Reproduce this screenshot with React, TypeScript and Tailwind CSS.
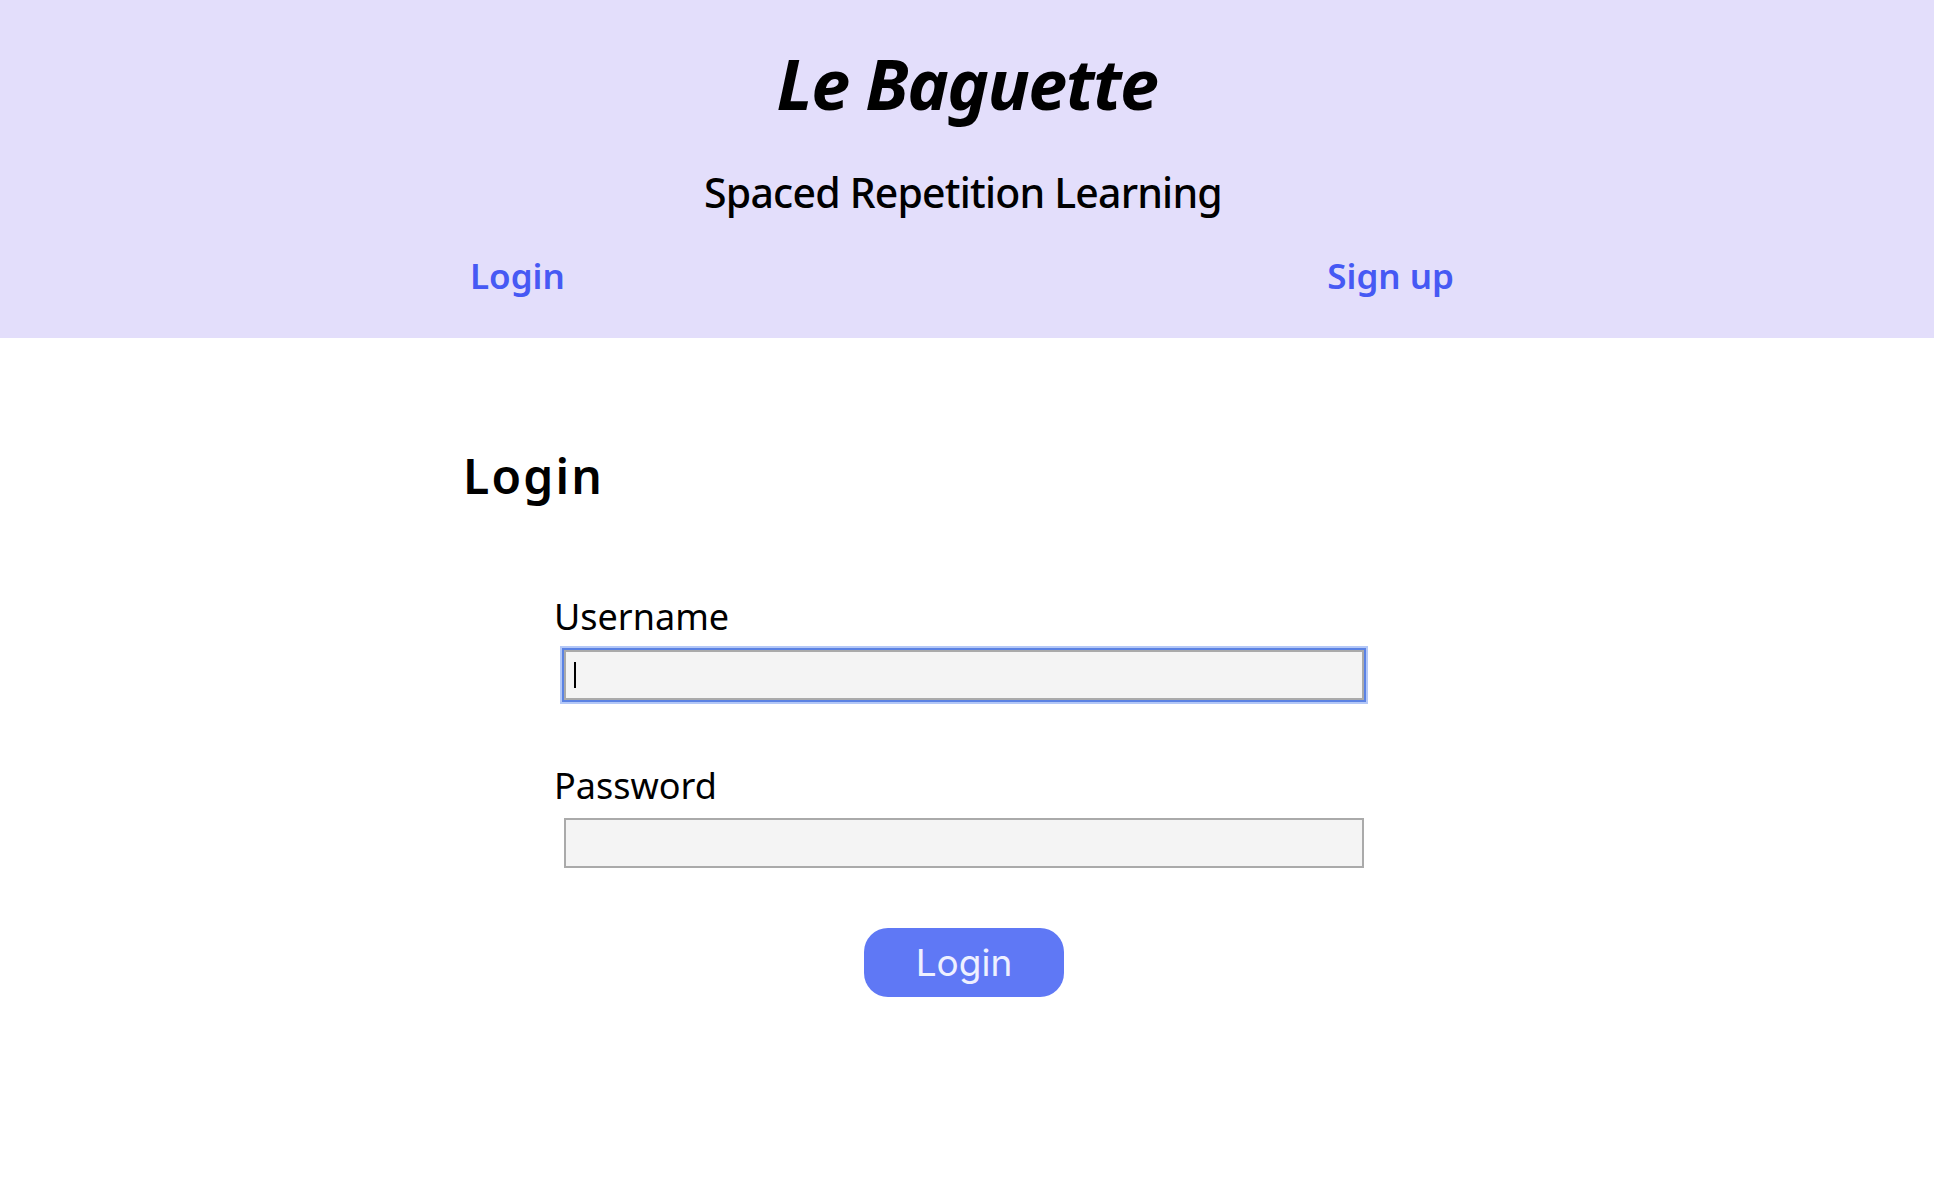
import React from "react";

export default function App() {
  const sans = { fontFamily: '"Noto Sans", "Open Sans", sans-serif' };
  return (
    <div className="min-h-[1182px] w-full bg-white text-black" style={sans}>
      <header className="bg-[#e3defb] h-[338px] pt-[47px] flex flex-col">
        <h1 className="text-center text-[70px] leading-[72px] font-bold italic tracking-[-1.5px]">Le Baguette</h1>
        <h2 className="mt-[52px] pr-[8px] text-center text-[41px] leading-[42px] font-medium tracking-[-0.8px]">Spaced Repetition Learning</h2>
        <nav className="mt-[45px] ml-[470px] w-[984px] flex justify-between text-[35px] leading-[36px] font-semibold text-[#4659f4]">
          <a href="#">Login</a>
          <a href="#">Sign up</a>
        </nav>
      </header>
      <main className="ml-[463px] w-[1000px]">
        <h1 className="mt-[114px] text-[48px] leading-[48px] font-semibold tracking-[2.2px]">Login</h1>
        <form className="ml-[1px] mt-[99px] flex flex-col" onSubmit={(e) => e.preventDefault()}>
          <label className="ml-[90px] text-[36px] leading-[36px]">Username</label>
          <div className="relative mt-[15px] ml-[100px] w-[800px] h-[50px]">
            <input
              type="text"
              className="w-full h-full bg-[#f4f4f4] border-2 border-[#aaaaaa] outline-none shadow-[0_0_0_2px_#5b82e3,0_0_0_4px_#b4c8f7]"
            />
            <span className="absolute left-[10px] top-[12px] w-[2px] h-[26px] bg-black" />
          </div>
          <label className="mt-[68px] ml-[90px] text-[36px] leading-[36px]">Password</label>
          <input
            type="password"
            className="mt-[14px] ml-[100px] w-[800px] h-[50px] bg-[#f4f4f4] border-2 border-[#aaaaaa] outline-none"
          />
          <button
            type="submit"
            className="mt-[60px] ml-[400px] w-[200px] h-[69px] rounded-[24px] bg-[#5f78f5] text-[#eef0ff] text-[37px] leading-[37px] font-normal"
            style={{ fontFamily: 'Inter, "Liberation Sans", sans-serif' }}
          >
            Login
          </button>
        </form>
      </main>
    </div>
  );
}
